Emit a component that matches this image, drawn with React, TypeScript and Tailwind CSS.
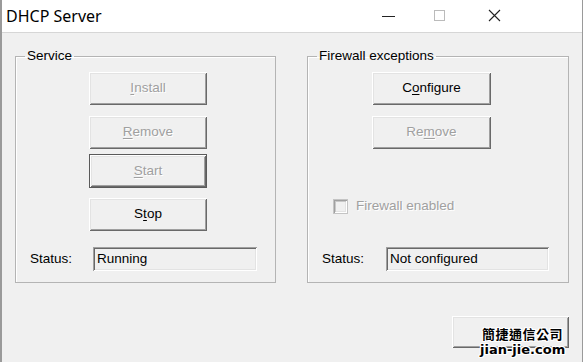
import React from 'react'

const ui = { fontFamily: '"Liberation Sans", Arial, sans-serif' }

function Btn({
  children,
  disabled,
  isDefault,
  className = '',
}: {
  children?: React.ReactNode
  disabled?: boolean
  isDefault?: boolean
  className?: string
}) {
  const bevel =
    'shadow-[inset_1px_1px_0_#ffffff,inset_-1px_-1px_0_#696969,inset_2px_2px_0_#e3e3e3,inset_-2px_-2px_0_#a0a0a0]'
  return (
    <div
      className={`${className} ${isDefault ? 'border border-[#5a5a5a]' : ''} box-border`}
    >
      <div
        className={`flex h-full w-full items-center justify-center bg-[#f0f0f0] text-[13.5px] ${bevel} ${
          disabled ? 'text-[#a0a0a0] [text-shadow:1px_1px_0_#ffffff]' : 'text-black'
        }`}
      >
        {children}
      </div>
    </div>
  )
}

function U({ children }: { children: React.ReactNode }) {
  return <span className="underline underline-offset-2 decoration-1">{children}</span>
}

function Field({ value, className = '' }: { value: string; className?: string }) {
  return (
    <div
      className={`${className} flex h-[24px] items-center bg-[#f0f0f0] pl-[4px] text-[13.5px] text-black shadow-[inset_1px_1px_0_#a0a0a0,inset_-1px_-1px_0_#ffffff,inset_2px_2px_0_#696969,inset_-2px_-2px_0_#e3e3e3]`}
    >
      {value}
    </div>
  )
}

function Group({
  title,
  children,
  className = '',
}: {
  title: string
  children: React.ReactNode
  className?: string
}) {
  return (
    <fieldset
      className={`${className} border border-[#b4b4b4] shadow-[inset_1px_1px_0_#ffffff]`}
    >
      <legend className="ml-[9px] px-[2px] text-[13.5px] leading-[16px] text-black">{title}</legend>
      {children}
    </fieldset>
  )
}

export default function App() {
  return (
    <div
      className="relative flex h-[362px] w-[583px] flex-col overflow-hidden border-l-2 border-r border-[#9a9a9a] bg-[#f0f0f0]"
      style={ui}
    >
      {/* title bar */}
      <div className="flex h-[33px] shrink-0 items-center border-b border-[#d6d6d6] bg-white">
        <div
          className="pl-[4px] text-[16px] text-black"
          style={{ fontFamily: '"Noto Sans", "Open Sans", sans-serif' }}
        >
          DHCP Server
        </div>
        <div className="ml-auto flex h-full items-center">
          <svg width="14" height="14" viewBox="0 0 14 14" className="mr-[38px]">
            <line x1="0" y1="7.5" x2="13" y2="7.5" stroke="#222" strokeWidth="1" />
          </svg>
          <svg width="12" height="12" viewBox="0 0 12 12" className="mr-[42px]">
            <rect x="0.5" y="0.5" width="10" height="10" fill="none" stroke="#bbb" strokeWidth="1" />
          </svg>
          <svg width="14" height="14" viewBox="0 0 14 14" className="mr-[80px]">
            <path d="M1 1 L12 12 M12 1 L1 12" stroke="#222" strokeWidth="1.1" />
          </svg>
        </div>
      </div>

      {/* body */}
      <div className="flex flex-col px-[13px] pt-[15px]">
        <div className="flex gap-[31px]">
          <Group title="Service" className="h-[235px] w-[261px]">
            <div className="flex flex-col pl-[73px] pt-[8px]">
              <Btn disabled className="h-[33px] w-[118px]">
                <U>I</U>nstall
              </Btn>
              <Btn disabled className="mt-[11px] h-[33px] w-[118px]">
                <U>R</U>emove
              </Btn>
              <Btn disabled isDefault className="mt-[5px] h-[34px] w-[118px]">
                <U>S</U>tart
              </Btn>
              <Btn className="mt-[10px] h-[33px] w-[118px]">
                S<U>t</U>op
              </Btn>
            </div>
            <div className="mt-[16px] flex items-center">
              <span className="w-[77px] pl-[14px] text-[13.5px] text-black">Status:</span>
              <Field value="Running" className="w-[164px]" />
            </div>
          </Group>

          <Group title="Firewall exceptions" className="h-[235px] w-[262px]">
            <div className="flex flex-col pl-[64px] pt-[8px]">
              <Btn className="h-[33px] w-[119px]">
                C<U>o</U>nfigure
              </Btn>
              <Btn disabled className="mt-[11px] h-[33px] w-[119px]">
                Re<U>m</U>ove
              </Btn>
            </div>
            <div className="mt-[47px] flex items-center pl-[25px]">
              <div className="h-[15px] w-[15px] border border-[#c4c4c4] bg-[#f0f0f0] shadow-[inset_1px_1px_0_#a0a0a0,inset_-1px_-1px_0_#ffffff,inset_2px_2px_0_#c8c8c8,inset_-2px_-2px_0_#e3e3e3]" />
              <span className="ml-[8px] text-[13.5px] text-[#a0a0a0] [text-shadow:1px_1px_0_#ffffff]">
                Firewall enabled
              </span>
            </div>
            <div className="mt-[31px] flex items-center">
              <span className="w-[78px] pl-[14px] text-[13.5px] text-black">Status:</span>
              <Field value="Not configured" className="w-[163px]" />
            </div>
          </Group>
        </div>

        <div className="mt-[33px] flex justify-end">
          <Btn className="h-[32px] w-[117px]" />
        </div>
      </div>

      {/* watermark overlay */}
      <div
        className="absolute left-[478px] top-[326px] flex flex-col items-center text-black"
        style={{
          fontFamily: '"Noto Sans CJK TC", "Noto Sans CJK SC", sans-serif',
          textShadow:
            '1px 0 0 #fff, -1px 0 0 #fff, 0 1px 0 #fff, 0 -1px 0 #fff, 1px 1px 0 #fff, -1px -1px 0 #fff, 1px -1px 0 #fff, -1px 1px 0 #fff',
        }}
      >
        <span className="text-[13px] font-bold leading-[16px] tracking-[0.5px]">簡捷通信公司</span>
        <span
          className="text-[13px] font-bold leading-[15px]"
          style={{ fontFamily: '"DejaVu Sans", sans-serif' }}
        >
          jian-jie.com
        </span>
      </div>
    </div>
  )
}
